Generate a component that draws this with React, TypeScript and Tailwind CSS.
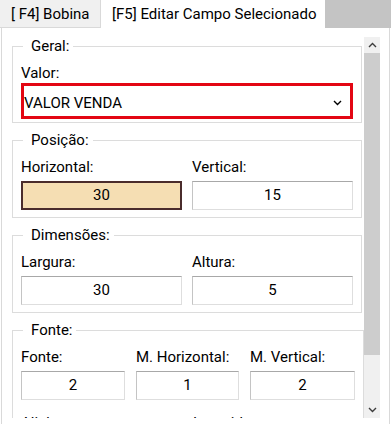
import React from 'react';

const FONT = "font-['Roboto','Noto_Sans',sans-serif]";

// Small caret used by the select and the scrollbar arrows
const Caret: React.FC<{ up?: boolean; className?: string }> = ({ up, className }) => (
  <svg width="9" height="6" viewBox="0 0 9 6" className={className}>
    <path
      d={up ? 'M1 5 L4.5 1.5 L8 5' : 'M1 1 L4.5 4.5 L8 1'}
      fill="none"
      stroke="currentColor"
      strokeWidth="1.4"
    />
  </svg>
);

const Group: React.FC<{ title: string; children: React.ReactNode; className?: string }> = ({
  title,
  children,
  className = '',
}) => (
  <fieldset className={`border border-[#dcdcdc] px-[8px] ${className}`}>
    <legend className="ml-[2px] pl-[8px] pr-[4px] leading-[18px]">{title}</legend>
    {children}
  </fieldset>
);

const Field: React.FC<{ label: string; value: string; highlight?: boolean }> = ({ label, value, highlight }) => (
  <div className="flex flex-col min-w-0">
    <div className="leading-[18px] pt-[9px] whitespace-nowrap">{label}</div>
    <div
      className={
        highlight
          ? 'mt-[5px] h-[29px] flex items-center justify-center bg-[#f5deb3] border-2 border-[#4a2c2c]'
          : 'mt-[5px] h-[29px] flex items-center justify-center bg-white border border-t-[#a8a8a8] border-l-[#c4c4c4] border-r-[#dedede] border-b-[#dedede]'
      }
    >
      {value}
    </div>
  </div>
);

export default function App() {
  return (
    <div className={`w-[391px] h-[424px] bg-white text-[15px] text-black overflow-hidden flex flex-col ${FONT}`}>
      {/* tab strip */}
      <div className="h-[28px] flex bg-[#c4c4c4] shrink-0">
        <div className="w-[101px] h-[28px] bg-[#f0f0f0] border-r border-b border-[#d9d9d9] flex items-center pl-[11px] leading-[18px] whitespace-nowrap">
          [ F4] Bobina
        </div>
        <div className="w-[224px] h-[28px] bg-white pl-[11px] flex items-center leading-[18px] whitespace-nowrap">
          [F5] Editar Campo Selecionado
        </div>
      </div>

      {/* tab page */}
      <div className="ml-[1px] w-[389px] flex-1 bg-white border-x border-[#d9d9d9] pt-[9px]">
        <div className="h-[381px] flex overflow-hidden">
          <div className="pl-[10px] w-[360px] shrink-0 flex flex-col gap-[8px]">
            <Group title="Geral:" className="pb-[3px]">
              <div className="leading-[18px] pt-[9px]">Valor:</div>
              <div className="mt-[1px] h-[36px] border-[3px] border-[#e30613] flex items-center justify-between pl-[0px] pr-[8px] pt-[3px]">
                <span className="leading-[18px]">VALOR VENDA</span>
                <Caret className="text-black" />
              </div>
            </Group>

            <Group title="Posição:" className="pb-[7px]">
              <div className="grid grid-cols-2 gap-x-[10px]">
                <Field label="Horizontal:" value="30" highlight />
                <Field label="Vertical:" value="15" />
              </div>
            </Group>

            <Group title="Dimensões:" className="pb-[7px]">
              <div className="grid grid-cols-2 gap-x-[10px]">
                <Field label="Largura:" value="30" />
                <Field label="Altura:" value="5" />
              </div>
            </Group>

            <Group title="Fonte:" className="pb-[7px]">
              <div className="grid grid-cols-[104px_103px_105px] gap-x-[11px]">
                <Field label="Fonte:" value="2" />
                <Field label="M. Horizontal:" value="1" />
                <Field label="M. Vertical:" value="2" />
              </div>
              <div className="grid grid-cols-2 gap-x-[10px] mt-[5px]">
                <Field label="Alinhamento:" value="Esquerda" />
                <Field label="Invertido:" value="Não" />
              </div>
            </Group>
          </div>

          {/* vertical scrollbar */}
          <div className="ml-[2px] w-[16px] h-[381px] flex flex-col bg-[#f0f0f0] shrink-0">
            <div className="h-[16px] flex items-center justify-center text-[#3c3c3c]">
              <Caret up />
            </div>
            <div className="h-[302px] bg-[#cdcdcd]" />
            <div className="flex-1" />
            <div className="h-[16px] flex items-center justify-center text-[#3c3c3c]">
              <Caret />
            </div>
          </div>
        </div>
      </div>
    </div>
  );
}
